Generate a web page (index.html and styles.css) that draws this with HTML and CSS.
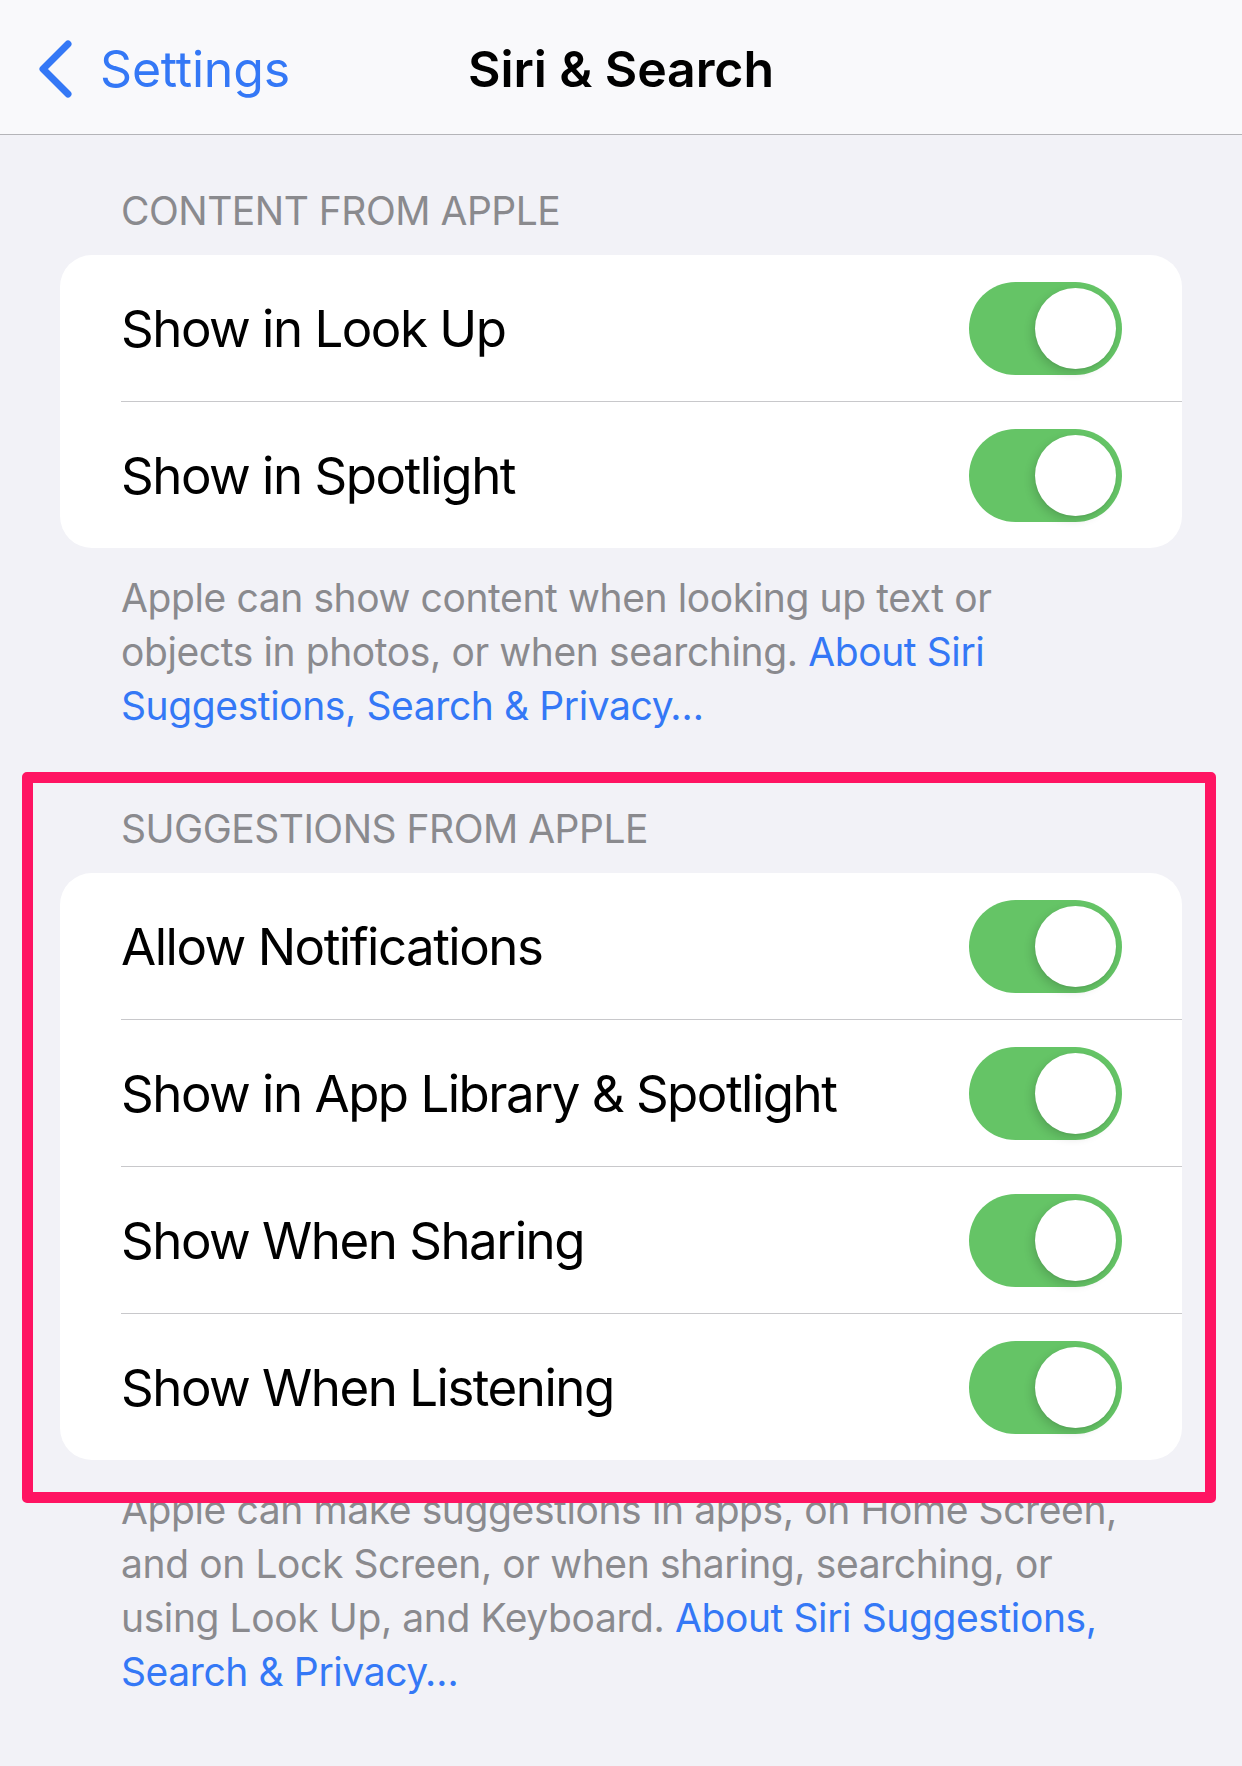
FILE: index.html
```html
<!DOCTYPE html>
<html lang="en">
<head>
<meta charset="utf-8">
<title>Siri &amp; Search</title>
<link rel="stylesheet" href="styles.css">
</head>
<body>
<header class="nav">
  <div class="nav-left">
    <svg class="chev" width="40" height="60" viewBox="0 0 40 60" aria-hidden="true">
      <path d="M32 5 L7 30 L32 55" fill="none" stroke="#3478f6" stroke-width="7" stroke-linecap="round" stroke-linejoin="round"/>
    </svg>
    <span class="back-label">Settings</span>
  </div>
  <div class="nav-title">Siri &amp; Search</div>
  <div class="nav-right"></div>
</header>

<main class="content">
  <section class="group first">
    <div class="group-header">CONTENT FROM APPLE</div>
    <div class="card">
      <div class="row"><div class="row-inner"><span class="label">Show in Look Up</span><span class="toggle"><span class="knob"></span></span></div></div>
      <div class="row"><div class="row-inner"><span class="label">Show in Spotlight</span><span class="toggle"><span class="knob"></span></span></div></div>
    </div>
    <p class="group-footer">Apple can show content when looking up text or objects in photos, or when searching. <span class="link">About Siri Suggestions, Search &amp; Privacy…</span></p>
  </section>

  <section class="group second">
    <div class="group-header">SUGGESTIONS FROM APPLE</div>
    <div class="card">
      <div class="row"><div class="row-inner"><span class="label">Allow Notifications</span><span class="toggle"><span class="knob"></span></span></div></div>
      <div class="row"><div class="row-inner"><span class="label">Show in App Library &amp; Spotlight</span><span class="toggle"><span class="knob"></span></span></div></div>
      <div class="row"><div class="row-inner"><span class="label">Show When Sharing</span><span class="toggle"><span class="knob"></span></span></div></div>
      <div class="row"><div class="row-inner"><span class="label">Show When Listening</span><span class="toggle"><span class="knob"></span></span></div></div>
    </div>
    <p class="group-footer">Apple can make suggestions in apps, on Home Screen, and on Lock Screen, or when sharing, searching, or using Look Up, and Keyboard. <span class="link">About Siri Suggestions, Search &amp; Privacy…</span></p>
  </section>
</main>

<div class="highlight" aria-hidden="true"></div>
</body>
</html>
```

FILE: styles.css
```css
* { box-sizing: border-box; }

html, body {
  margin: 0;
  padding: 0;
}

body {
  position: relative;
  width: 1242px;
  min-height: 1766px;
  background: #f2f2f7;
  font-family: "Inter", "Noto Sans", sans-serif;
  color: #000;
  -webkit-font-smoothing: antialiased;
}

/* ---------- navigation bar ---------- */
.nav {
  height: 135px;
  padding-top: 4px;
  background: #f9f9fb;
  border-bottom: 1px solid #b4b4b8;
  display: grid;
  grid-template-columns: 1fr auto 1fr;
  align-items: center;
}

.nav-left {
  display: flex;
  align-items: center;
  padding-left: 36px;
  gap: 24px;
}

.chev { display: block; }

.back-label {
  font-size: 50px;
  color: #3478f6;
  letter-spacing: -0.2px;
}

.nav-title {
  font-size: 50px;
  font-weight: 600;
  letter-spacing: -0.1px;
}

/* ---------- content ---------- */
.content {
  padding: 0 60px;
}

.group-header {
  font-size: 39px;
  line-height: 48px;
  color: #8a8a8e;
  letter-spacing: -0.5px;
  padding-left: 61px;
  margin-bottom: 20px;
}

.group.first .group-header { margin-top: 52px; }
.group.second .group-header { margin-top: 72px; }

.card {
  background: #fff;
  border-radius: 32px;
  overflow: hidden;
}

.row {
  padding-left: 61px;
}

.row-inner {
  height: 147px;
  display: flex;
  align-items: center;
  justify-content: space-between;
  padding-right: 60px;
  border-bottom: 1px solid #c8c8cb;
}

.row:last-child .row-inner {
  height: 146px;
  border-bottom: none;
}

.label {
  font-size: 51px;
  letter-spacing: -1.5px;
}

.toggle {
  width: 153px;
  height: 93px;
  border-radius: 47px;
  background: #65c466;
  display: flex;
  align-items: center;
  justify-content: flex-end;
  padding-right: 6px;
}

.knob {
  width: 81px;
  height: 81px;
  border-radius: 50%;
  background: #fff;
  box-shadow: -3px 4px 10px rgba(0, 0, 0, 0.14), 0 1px 2px rgba(0, 0, 0, 0.06);
}

.group-footer {
  margin: 23px 0 0;
  padding: 0 58px 0 61px;
  font-size: 39px;
  line-height: 54px;
  letter-spacing: -0.4px;
  color: #8a8a8e;
}

.link {
  color: #3478f6;
}

/* ---------- annotation overlay ---------- */
.highlight {
  position: absolute;
  left: 22px;
  top: 772px;
  width: 1194px;
  height: 731px;
  border: 11px solid #ff1462;
  border-radius: 5px;
  pointer-events: none;
}
```
